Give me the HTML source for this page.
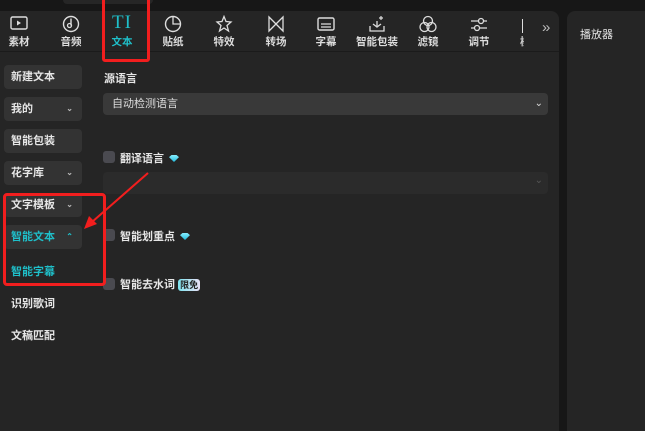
<!DOCTYPE html>
<html><head><meta charset="utf-8"><style>
*{margin:0;padding:0;box-sizing:border-box}
body{width:645px;height:431px;background:#171717;position:relative;overflow:hidden;font-family:"Liberation Sans","Noto Sans CJK SC",sans-serif;color:#e6e6e6;font-size:11px}
.a{position:absolute}
.main{left:0;top:11px;width:559px;height:420px;background:#252525;border-radius:0 8px 0 0}
.right{left:567px;top:11px;width:78px;height:420px;background:#252525;border-radius:8px 0 0 0}
.tb{left:0;top:11px;width:559px;height:41px;border-bottom:1px solid #1b1b1b}
.it{position:absolute;top:0;width:50px;margin-left:-25px;text-align:center}
.it svg{position:absolute;left:16px;top:4px}
.it span{position:absolute;left:0;width:50px;top:23px;font-size:10.5px;font-weight:bold;color:#ddd}
.btn{position:absolute;left:4px;width:78px;height:24px;background:#333;border-radius:4px;padding-left:7px;line-height:24px;font-weight:bold;font-size:11px}
.btn i{position:absolute;right:9px;top:0;font-style:normal;font-size:8px;color:#bbb}
.lk{position:absolute;left:11px;font-weight:bold;font-size:11px}
.cb{position:absolute;left:103px;width:12px;height:12px;border-radius:3px;background:#4a4a50}
.lb{position:absolute;left:120px;font-weight:bold;font-size:11px}
.dia{display:inline-block;width:10px;height:7px;margin-left:5px;background:linear-gradient(#8ef,#2bd);clip-path:polygon(0 30%,25% 0,75% 0,100% 30%,50% 100%)}
</style></head><body>
<div class="a" style="left:63px;top:0;width:90px;height:4px;background:#262626;border-radius:0 0 4px 4px"></div>
<div class="a main"></div>
<div class="a right"><div class="a" style="left:13px;top:15px;font-size:11px">播放器</div></div>
<div class="a tb">
 <div class="it" style="left:19px"><svg width="18" height="16"><rect x="1" y="2" width="16" height="12" rx="1.5" fill="none" stroke="#ddd" stroke-width="1.4"/><path d="M7 5.5v5l4-2.5z" fill="#ddd"/></svg><span>素材</span></div>
 <div class="it" style="left:71px"><svg width="18" height="18"><circle cx="9" cy="9" r="7.5" fill="none" stroke="#ddd" stroke-width="1.4"/><path d="M9 3.5v7" stroke="#ddd" stroke-width="1.4"/><circle cx="7.5" cy="10.5" r="2" fill="none" stroke="#ddd" stroke-width="1.3"/></svg><span>音频</span></div>
 <div class="it" style="left:122px"><div style="position:absolute;left:0;width:50px;top:1px;font-family:'Liberation Serif',serif;font-size:19px;color:#1fbfc9;letter-spacing:1px">TI</div><span style="color:#1fbfc9">文本</span></div>
 <div class="it" style="left:173px"><svg width="18" height="18"><circle cx="9" cy="9" r="7.5" fill="none" stroke="#ddd" stroke-width="1.4"/><path d="M9 1.5v7.5h7.5" fill="none" stroke="#ddd" stroke-width="1.3"/></svg><span>贴纸</span></div>
 <div class="it" style="left:224px"><svg width="18" height="18"><path d="M9 1.5l2 5 5 .5-4 3.5 1.5 5.5-4.5-3-4.5 3 1.5-5.5-4-3.5 5-.5z" fill="none" stroke="#ddd" stroke-width="1.3"/></svg><span>特效</span></div>
 <div class="it" style="left:276px"><svg width="18" height="18"><path d="M2 2v14l14-14v14z" fill="none" stroke="#ddd" stroke-width="1.3"/></svg><span>转场</span></div>
 <div class="it" style="left:326px"><svg width="18" height="18"><rect x="1" y="3" width="16" height="12" rx="1.5" fill="none" stroke="#ddd" stroke-width="1.4"/><path d="M4 9h10M4 12h10" stroke="#ddd" stroke-width="1.2"/></svg><span>字幕</span></div>
 <div class="it" style="left:377px"><svg width="18" height="18"><path d="M2 11v5h14v-5M9 6v5M5 9l4 3 4-3" fill="none" stroke="#ddd" stroke-width="1.3"/><path d="M13 1v4M11 3h4" stroke="#ddd" stroke-width="1.2"/></svg><span>智能包装</span></div>
 <div class="it" style="left:428px"><svg width="18" height="18"><circle cx="9" cy="6" r="4.5" fill="none" stroke="#ddd" stroke-width="1.3"/><circle cx="5.5" cy="12" r="4.5" fill="none" stroke="#ddd" stroke-width="1.3"/><circle cx="12.5" cy="12" r="4.5" fill="none" stroke="#ddd" stroke-width="1.3"/></svg><span>滤镜</span></div>
 <div class="it" style="left:479px"><svg width="18" height="18"><path d="M1 6h16M1 13h16" stroke="#ddd" stroke-width="1.3"/><circle cx="11" cy="6" r="2.5" fill="#252525" stroke="#ddd" stroke-width="1.3"/><circle cx="7" cy="13" r="2.5" fill="#252525" stroke="#ddd" stroke-width="1.3"/></svg><span>调节</span></div>
 <div class="a" style="left:522px;top:8px;width:1px;height:14px;background:#ddd"></div>
 <div class="a" style="left:520px;top:23px;width:4px;height:16px;overflow:hidden"><div style="font-size:10.5px;font-weight:bold;color:#ccc;white-space:nowrap">模板</div></div>
 <div class="a" style="left:542px;top:8px;font-size:15px;color:#bbb">»</div>
</div>
<div class="btn" style="top:65px">新建文本</div>
<div class="btn" style="top:97px">我的<i>⌄</i></div>
<div class="btn" style="top:129px">智能包装</div>
<div class="btn" style="top:161px">花字库<i>⌄</i></div>
<div class="btn" style="top:193px">文字模板<i>⌄</i></div>
<div class="btn" style="top:225px;color:#1fbfc9">智能文本<i style="color:#1fbfc9">⌃</i></div>
<div class="lk" style="top:263px;color:#1fbfc9">智能字幕</div>
<div class="lk" style="top:295px">识别歌词</div>
<div class="lk" style="top:327px">文稿匹配</div>
<div class="a" style="left:104px;top:70px;font-size:11px;font-weight:bold">源语言</div>
<div class="a" style="left:103px;top:93px;width:445px;height:22px;background:#393939;border-radius:4px;padding-left:9px;line-height:22px;font-size:11px;color:#ddd">自动检测语言<span style="position:absolute;right:5px;top:0;font-size:10px">⌄</span></div>
<div class="cb" style="top:151px"></div><div class="lb" style="top:150px">翻译语言<span class="dia"></span></div>
<div class="a" style="left:103px;top:172px;width:445px;height:22px;background:#2b2b2b;border-radius:4px"><span style="position:absolute;right:5px;top:3px;font-size:10px;color:#555">⌄</span></div>
<div class="cb" style="top:229px"></div><div class="lb" style="top:228px">智能划重点<span class="dia"></span></div>
<div class="cb" style="top:278px"></div><div class="lb" style="top:276px">智能去水词 <span style="display:inline-block;font-size:9px;background:linear-gradient(90deg,#7de3ee,#e9e0f5);color:#222;border-radius:3px;padding:0 2px;line-height:12px">限免</span></div>
<div class="a" style="left:102px;top:-3px;width:48px;height:65px;border:3px solid #f21e1e;border-radius:3px"></div>
<div class="a" style="left:3px;top:193px;width:103px;height:93px;border:3px solid #f21e1e;border-radius:4px"></div>
<svg class="a" style="left:0;top:0" width="645" height="431"><path d="M148 173L92 222" stroke="#f21e1e" stroke-width="2"/><path d="M84 229l5-13 8 8z" fill="#f21e1e"/></svg>
</body></html>
